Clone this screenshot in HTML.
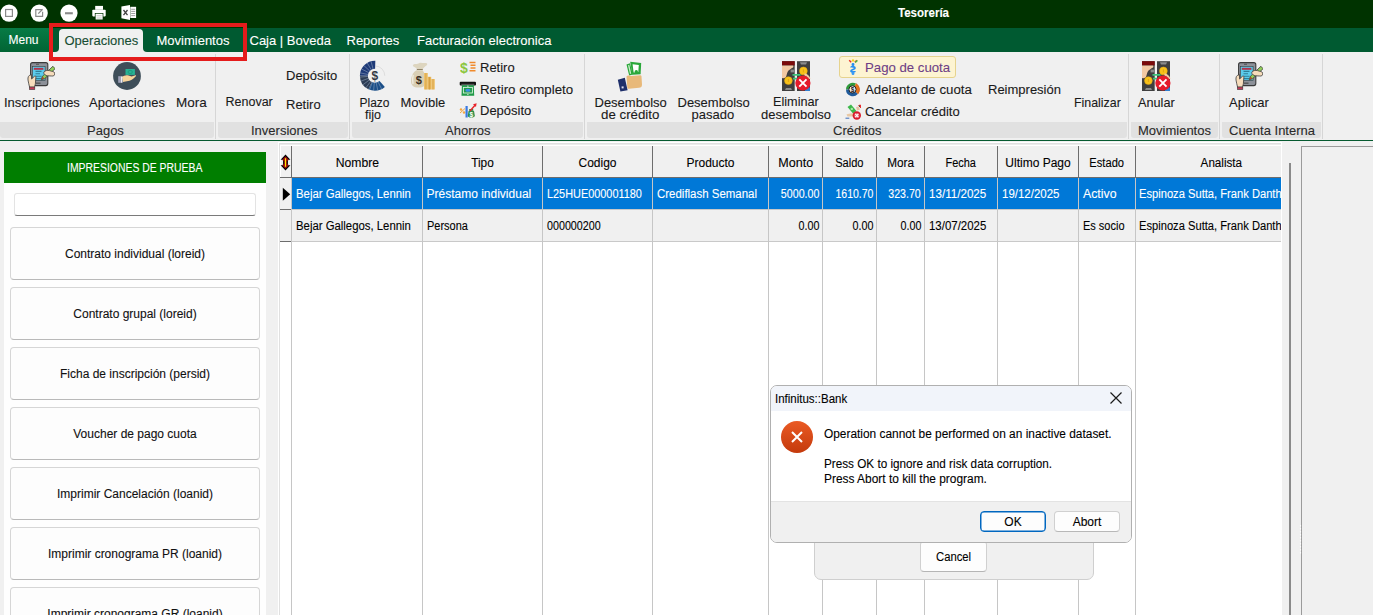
<!DOCTYPE html>
<html><head><meta charset="utf-8">
<style>
*{margin:0;padding:0;box-sizing:border-box}
html,body{width:1373px;height:615px;overflow:hidden;background:#f0f0f0;font-family:"Liberation Sans",sans-serif;position:relative}
.a{position:absolute}
.t{position:absolute;white-space:nowrap;line-height:1;font-size:13px;color:#1a1a1a;-webkit-text-stroke:0.1px currentColor}
#title{left:0;top:0;width:1373px;height:28px;background:#003300}
#menubar{left:0;top:28px;width:1373px;height:24px;background:#005a31}
#ribbon{left:0;top:52px;width:1373px;height:88px;background:#f0f0f0}
.gbar{position:absolute;top:122px;height:16px;background:#e1e1e1;border-radius:0 0 3px 3px}
.sep{position:absolute;top:54px;width:1px;height:85px;background:#d6d6d6}
.gl{position:absolute;top:123.6px;line-height:1;font-size:13px;color:#2a2a2a;white-space:nowrap;-webkit-text-stroke:0.1px currentColor}
</style></head>
<body>
<!-- title bar -->
<div class="a" id="title"></div>
<div class="t" style="left:898px;top:6.9px;font-size:12px;font-weight:bold;color:#fff;transform:scaleX(0.96);transform-origin:0 0">Tesorería</div>

<!-- menu bar -->
<div class="a" id="menubar"></div>
<div class="a" style="left:0;top:28px;width:50px;height:24px;background:linear-gradient(#077b45,#016434)"></div>
<div class="a" style="left:54px;top:46px;width:95px;height:6px;background:#f0f0f0"></div>
<div class="a" style="left:50px;top:28px;width:9px;height:24px;background:#005a31;border-bottom-right-radius:4px"></div>
<div class="a" style="left:143px;top:28px;width:9px;height:24px;background:#005a31;border-bottom-left-radius:4px"></div>
<div class="a" style="left:59px;top:29px;width:84px;height:23px;background:#f0f0f0;border-radius:4px 4px 0 0"></div>
<div class="t" style="left:8.5px;top:34px;font-size:12px;color:#fff">Menu</div>
<div class="t" style="left:64.5px;top:34px;color:#174d33">Operaciones</div>
<div class="t" style="left:156.5px;top:34px;color:#fff">Movimientos</div>
<div class="t" style="left:249.5px;top:34px;color:#fff">Caja | Boveda</div>
<div class="t" style="left:346.5px;top:34px;color:#fff">Reportes</div>
<div class="t" style="left:417px;top:34px;color:#fff">Facturación electronica</div>

<!-- ribbon -->
<div class="a" id="ribbon"></div>
<div class="gbar" style="left:0;width:214px"></div>
<div class="gbar" style="left:218px;width:130px"></div>
<div class="gbar" style="left:352px;width:231px"></div>
<div class="gbar" style="left:587px;width:540px"></div>
<div class="gbar" style="left:1131px;width:87px"></div>
<div class="gbar" style="left:1222px;width:99px"></div>
<div class="sep" style="left:215px"></div>
<div class="sep" style="left:349px"></div>
<div class="sep" style="left:584px"></div>
<div class="sep" style="left:1128px"></div>
<div class="sep" style="left:1219px"></div>
<div class="sep" style="left:1322px"></div>
<div class="gl" style="left:87px">Pagos</div>
<div class="gl" style="left:251px">Inversiones</div>
<div class="gl" style="left:445px">Ahorros</div>
<div class="gl" style="left:833px">Créditos</div>
<div class="gl" style="left:1138px">Movimientos</div>
<div class="gl" style="left:1229px">Cuenta Interna</div>


<!-- title icons -->
<svg class="a" style="left:0;top:0" width="150" height="28" viewBox="0 0 150 28">
 <circle cx="9.05" cy="13.1" r="8.6" fill="#fff"/>
 <rect x="5.6" y="9.5" width="6.8" height="6.9" fill="none" stroke="#8a8a8a" stroke-width="1.2"/>
 <circle cx="39.2" cy="13.1" r="8.6" fill="#fff"/>
 <path d="M42 9.6H35.8V16.4H42.6V11.8" fill="none" stroke="#8a8a8a" stroke-width="1.2"/>
 <path d="M38.3 13.6L42.6 9.2" stroke="#8a8a8a" stroke-width="1.3"/>
 <circle cx="69" cy="13.1" r="8.6" fill="#fff"/>
 <rect x="65" y="12.2" width="7.8" height="2.1" fill="#8a8a8a"/>
 <rect x="95.2" y="5.9" width="7.8" height="3.9" fill="#fff"/>
 <rect x="92.3" y="9.8" width="13.4" height="6.6" rx="0.8" fill="#fff"/>
 <rect x="95.2" y="13.4" width="7.8" height="6.5" fill="#fff" stroke="#003300" stroke-width="0.7"/>
 <path d="M96.5 15.8h5.2M96.5 18h5.2" stroke="#bbb" stroke-width="0.8"/>
 <path d="M121.4 6.4L130 5V20L121.4 18.2Z" fill="#fff"/>
 <rect x="130.3" y="6.8" width="5.8" height="11.2" fill="#fff"/>
 <path d="M123.5 10L127.5 15.2M127.5 10L123.5 15.2" stroke="#444" stroke-width="1.3"/>
 <path d="M131.2 9.3h4M131.2 11.4h4M131.2 13.5h4M131.2 15.6h4" stroke="#888" stroke-width="0.8"/>
</svg>

<!-- ribbon texts -->
<div class="t" style="left:4px;top:96px">Inscripciones</div>
<div class="t" style="left:89px;top:96px">Aportaciones</div>
<div class="t" style="left:176px;top:96px;font-size:13.5px">Mora</div>
<div class="t" style="left:225.5px;top:96px;font-size:12.5px">Renovar</div>
<div class="t" style="left:286px;top:69px">Depósito</div>
<div class="t" style="left:286px;top:97.5px">Retiro</div>
<div class="t" style="left:359.5px;top:96.6px;font-size:12px">Plazo</div>
<div class="t" style="left:365px;top:108.5px;font-size:12.5px">fijo</div>
<div class="t" style="left:400.5px;top:96px">Movible</div>
<div class="t" style="left:480px;top:61px">Retiro</div>
<div class="t" style="left:480px;top:82.5px;font-size:13.3px">Retiro completo</div>
<div class="t" style="left:480px;top:104.3px">Depósito</div>
<div class="t" style="left:594.5px;top:95.5px">Desembolso</div>
<div class="t" style="left:601px;top:108px;font-size:13.3px">de crédito</div>
<div class="t" style="left:677.5px;top:95.5px">Desembolso</div>
<div class="t" style="left:691.5px;top:108px">pasado</div>
<div class="t" style="left:773px;top:95.5px;font-size:12.7px">Eliminar</div>
<div class="t" style="left:761px;top:108px">desembolso</div>
<div class="a" style="left:839px;top:56px;width:117px;height:22px;background:#fdf4d2;border:1px solid #e6d38e;border-radius:3px"></div>
<div class="t" style="left:865px;top:61.4px;color:#6e3f86;font-size:13.2px">Pago de cuota</div>
<div class="t" style="left:865px;top:83px;font-size:13.25px">Adelanto de cuota</div>
<div class="t" style="left:865px;top:105px">Cancelar crédito</div>
<div class="t" style="left:988px;top:83px">Reimpresión</div>
<div class="t" style="left:1074px;top:97px;font-size:12.4px">Finalizar</div>
<div class="t" style="left:1138px;top:96.5px;font-size:12.7px">Anular</div>
<div class="t" style="left:1229px;top:95.5px">Aplicar</div>

<div class="a" style="left:0;top:140px;width:1373px;height:1px;background:#065a30"></div>


<!-- ribbon icons -->
<svg class="a" style="left:27px;top:62px" width="28" height="28" viewBox="0 0 28 28">
 <rect x="3.6" y="0.6" width="17.2" height="23" rx="2" fill="#8d9199" stroke="#3a3a3a" stroke-width="1.1"/>
 <rect x="5.5" y="4.4" width="12.6" height="14" fill="#5cccec" stroke="#3a3a3a" stroke-width="0.6"/>
 <rect x="6.8" y="5.8" width="9.6" height="2" fill="#b3324a"/>
 <path d="M8.5 9.4h6M8.5 11.8h4.5M8.5 14.2h6M8.5 16.6h6" stroke="#2f7f98" stroke-width="1.1"/>
 <path d="M9 2.3h3" stroke="#444" stroke-width="0.8"/>
 <rect x="8.5" y="20.5" width="5" height="1.4" fill="#555"/>
 <path d="M1 18C0.6 15 1.8 13.2 3.5 13L4.4 12.5L4.6 17L7.4 14.3C8.6 13.6 9.4 14.6 8.8 15.8L8.4 21.5C8.2 23 7.4 24.6 7.4 25.2H2.6C2.2 23 1.3 20.6 1 18Z" fill="#f6dcbb" stroke="#3a3a3a" stroke-width="0.8"/>
 <rect x="2.4" y="25" width="5.4" height="2.6" fill="#c23a56" stroke="#3a3a3a" stroke-width="0.6"/>
 <path d="M15.4 14.3L25.9 4.3L28.1 6.7L17.6 16.7L14.3 17.8Z" fill="#92d05a" stroke="#3a3a3a" stroke-width="0.8"/>
 <path d="M14.3 17.8L15.4 14.3L17.6 16.7Z" fill="#a0522d"/>
 <path d="M16.8 10.2C18 8.6 20.5 8 22.5 8.6L24.5 9.2C26.5 9.4 28 10.2 27.8 12C27.6 13.6 26.4 14.2 24.8 14L20.5 13.8C18.6 13.6 16.4 12 16.8 10.2Z" fill="#f6dcbb" stroke="#3a3a3a" stroke-width="0.8"/>
</svg><svg class="a" style="left:1235px;top:62px" width="28" height="28" viewBox="0 0 28 28">
 <rect x="3.6" y="0.6" width="17.2" height="23" rx="2" fill="#8d9199" stroke="#3a3a3a" stroke-width="1.1"/>
 <rect x="5.5" y="4.4" width="12.6" height="14" fill="#5cccec" stroke="#3a3a3a" stroke-width="0.6"/>
 <rect x="6.8" y="5.8" width="9.6" height="2" fill="#b3324a"/>
 <path d="M8.5 9.4h6M8.5 11.8h4.5M8.5 14.2h6M8.5 16.6h6" stroke="#2f7f98" stroke-width="1.1"/>
 <path d="M9 2.3h3" stroke="#444" stroke-width="0.8"/>
 <rect x="8.5" y="20.5" width="5" height="1.4" fill="#555"/>
 <path d="M1 18C0.6 15 1.8 13.2 3.5 13L4.4 12.5L4.6 17L7.4 14.3C8.6 13.6 9.4 14.6 8.8 15.8L8.4 21.5C8.2 23 7.4 24.6 7.4 25.2H2.6C2.2 23 1.3 20.6 1 18Z" fill="#f6dcbb" stroke="#3a3a3a" stroke-width="0.8"/>
 <rect x="2.4" y="25" width="5.4" height="2.6" fill="#c23a56" stroke="#3a3a3a" stroke-width="0.6"/>
 <path d="M15.4 14.3L25.9 4.3L28.1 6.7L17.6 16.7L14.3 17.8Z" fill="#92d05a" stroke="#3a3a3a" stroke-width="0.8"/>
 <path d="M14.3 17.8L15.4 14.3L17.6 16.7Z" fill="#a0522d"/>
 <path d="M16.8 10.2C18 8.6 20.5 8 22.5 8.6L24.5 9.2C26.5 9.4 28 10.2 27.8 12C27.6 13.6 26.4 14.2 24.8 14L20.5 13.8C18.6 13.6 16.4 12 16.8 10.2Z" fill="#f6dcbb" stroke="#3a3a3a" stroke-width="0.8"/>
</svg><svg class="a" style="left:781px;top:61px" width="30" height="31" viewBox="0 0 30 31">
 <path d="M1 0.2H13.7V30H1Z" fill="#3f3f3f"/>
 <path d="M16 0.2H29V30H16Z" fill="#3f3f3f"/>
 <path d="M19 1.2H26L25 3.4H20Z" fill="#8c8c8c"/>
 <path d="M4 29H11L10 27H5Z" fill="#8c8c8c"/>
 <rect x="1" y="0.2" width="12.7" height="4.2" fill="#7b0a0a"/>
 <path d="M1 4.4H12.2C12.8 5.5 12.2 6.8 11 7L7.5 9.5C6.2 11 5.8 13.5 5.2 15.6C4.5 17 3 17.5 1 17Z" fill="#f2c9a3"/>
 <rect x="9.6" y="8.6" width="3.8" height="2.8" fill="#8c8c8c"/>
 <circle cx="7.4" cy="19.6" r="3.9" fill="#f7c21a" stroke="#e8a810" stroke-width="0.5"/>
 <circle cx="22.4" cy="9.9" r="3.9" fill="#f7c21a" stroke="#e8a810" stroke-width="0.5"/>
 <path d="M7.4 18v3M22.4 8.3v3" stroke="#e09a10" stroke-width="0.8"/>
 <path d="M11.5 13.8H19.5M12 17.7H16.5" stroke="#3cc47a" stroke-width="1.8"/>
 <path d="M23.5 13.2C25.8 14 27.5 15.5 28.5 18" stroke="#f2c9a3" stroke-width="2.2" fill="none"/>
 <rect x="24" y="26.5" width="5" height="3.5" fill="#2f7fd0"/>
 <circle cx="21.9" cy="22" r="7.6" fill="#e41b2b"/>
 <path d="M18.3 18.4L25.5 25.6M25.5 18.4L18.3 25.6" stroke="#fff" stroke-width="1.9"/>
</svg><svg class="a" style="left:1141px;top:61px" width="30" height="31" viewBox="0 0 30 31">
 <path d="M1 0.2H13.7V30H1Z" fill="#3f3f3f"/>
 <path d="M16 0.2H29V30H16Z" fill="#3f3f3f"/>
 <path d="M19 1.2H26L25 3.4H20Z" fill="#8c8c8c"/>
 <path d="M4 29H11L10 27H5Z" fill="#8c8c8c"/>
 <rect x="1" y="0.2" width="12.7" height="4.2" fill="#7b0a0a"/>
 <path d="M1 4.4H12.2C12.8 5.5 12.2 6.8 11 7L7.5 9.5C6.2 11 5.8 13.5 5.2 15.6C4.5 17 3 17.5 1 17Z" fill="#f2c9a3"/>
 <rect x="9.6" y="8.6" width="3.8" height="2.8" fill="#8c8c8c"/>
 <circle cx="7.4" cy="19.6" r="3.9" fill="#f7c21a" stroke="#e8a810" stroke-width="0.5"/>
 <circle cx="22.4" cy="9.9" r="3.9" fill="#f7c21a" stroke="#e8a810" stroke-width="0.5"/>
 <path d="M7.4 18v3M22.4 8.3v3" stroke="#e09a10" stroke-width="0.8"/>
 <path d="M11.5 13.8H19.5M12 17.7H16.5" stroke="#3cc47a" stroke-width="1.8"/>
 <path d="M23.5 13.2C25.8 14 27.5 15.5 28.5 18" stroke="#f2c9a3" stroke-width="2.2" fill="none"/>
 <rect x="24" y="26.5" width="5" height="3.5" fill="#2f7fd0"/>
 <circle cx="21.9" cy="22" r="7.6" fill="#e41b2b"/>
 <path d="M18.3 18.4L25.5 25.6M25.5 18.4L18.3 25.6" stroke="#fff" stroke-width="1.9"/>
</svg>
<svg class="a" style="left:113px;top:62px" width="28" height="28" viewBox="0 0 28 28">
 <circle cx="14" cy="14" r="13.9" fill="#3e4e59"/>
 <rect x="12.5" y="7" width="9.4" height="5.9" fill="#27b394"/>
 <ellipse cx="17.2" cy="10" rx="2.2" ry="1.6" fill="none" stroke="#1a8f74" stroke-width="0.7"/>
 <path d="M9 14.8C11 13.5 13.2 13 15.5 13.6L18.6 14.5L22.5 13.3C23.2 13.3 23.2 14 22.6 14.5C21 16 19 18.2 16.5 18.8L10 20Z" fill="#f7d49b"/>
 <rect x="5.2" y="14.2" width="4" height="6.6" fill="#9ea1b8"/>
 <rect x="8.2" y="14.6" width="1.2" height="6" fill="#fff"/>
</svg>
<svg class="a" style="left:355px;top:58px" width="35" height="36" viewBox="0 0 35 36">
 <circle cx="19.9" cy="17.8" r="11" fill="none" stroke="#1b4f88" stroke-width="8" stroke-dasharray="12.86 200" stroke-dashoffset="-9.22"/>
 <circle cx="19.9" cy="17.8" r="11" fill="none" stroke="#2d3d55" stroke-width="8" stroke-dasharray="12.48 200" stroke-dashoffset="-22.08"/>
 <circle cx="19.9" cy="17.8" r="11" fill="none" stroke="#1e3a78" stroke-width="8" stroke-dasharray="17.28 200" stroke-dashoffset="-34.56"/>
 <circle cx="19.9" cy="17.8" r="9.9" fill="none" stroke="#c8c8c8" stroke-width="0.5" stroke-dasharray="23.84 200" stroke-dashoffset="-46.65"/>
 <path d="M23.1 24.0L26.7 31.2M21.2 24.7L22.8 32.5M19.3 24.8L18.6 32.7M17.4 24.3L14.5 31.8M15.7 23.4L10.9 29.8M14.3 22.0L7.9 26.8M13.4 20.3L5.9 23.2M12.9 18.4L5.0 19.1M13.0 16.5L5.2 14.9M13.7 14.6L6.5 11.0M14.8 13.0L8.9 7.6M16.3 11.8L12.2 4.9M18.1 11.0L16.0 3.3" stroke="#9fb0c8" stroke-width="0.5"/>
 <text x="19.9" y="22.1" font-family="Liberation Sans" font-size="12" font-weight="bold" text-anchor="middle" fill="#333a44">$</text>
</svg>
<svg class="a" style="left:410px;top:62px" width="26" height="28" viewBox="0 0 26 28">
 <path d="M3.5 2.5C5.5 1.2 7 2.6 9 1.2C11 0.2 13 1.5 15.5 1C17.5 1 17.8 2.5 16.5 3.4C15 4.5 13.5 5.5 12.5 7.2H7C6 6 4.5 5 3.5 4.5C2.6 4 2.8 3 3.5 2.5Z" fill="#ddd5bf"/>
 <path d="M6.8 7.5H12.8" stroke="#8f8368" stroke-width="1"/>
 <path d="M6.5 8.2C3 10 1 14.5 1 19C1 23.5 3.5 25.6 8.5 25.6C13.5 25.6 16 23.5 16 19C16 14.5 14 10 12.6 8.2Z" fill="#d9cfb5"/>
 <path d="M3.2 13C2.5 15.5 2.4 19 3 22" stroke="#f1ece0" stroke-width="1.4" fill="none"/>
 <text x="8.7" y="22" font-family="Liberation Sans" font-size="11" font-weight="bold" text-anchor="middle" fill="#3a2d22">$</text>
 <rect x="14" y="11" width="3.8" height="16.5" fill="#efc168"/>
 <rect x="17.8" y="14.8" width="3.4" height="12.7" fill="#e6b458"/>
 <rect x="21.2" y="17" width="3.6" height="10.5" fill="#efc168"/>
 <path d="M15.9 11v16.5M19.5 15v12.5M23 17v10.5" stroke="#c8923a" stroke-width="0.6"/>
</svg>
<svg class="a" style="left:460px;top:60px" width="17" height="14" viewBox="0 0 17 14">
 <text x="0" y="12.5" font-family="Liberation Sans" font-size="14" font-weight="bold" fill="#8cc63f">$</text>
 <path d="M9.5 2.5h6M10.5 5.3h5M10.5 8h5M9.5 10.8h6" stroke="#f08a2c" stroke-width="1.5"/>
</svg>
<svg class="a" style="left:459px;top:81px" width="18" height="16" viewBox="0 0 18 16">
 <rect x="0.7" y="0.8" width="16.3" height="3.8" rx="1" fill="#111"/>
 <rect x="2.3" y="2.8" width="13" height="1.2" fill="#555"/>
 <path d="M2.9 4.2H14.8L15.2 14.7H2.5Z" fill="#1f9a48"/>
 <rect x="4.4" y="6.4" width="9" height="5.6" fill="none" stroke="#d8f0dc" stroke-width="0.9"/>
 <ellipse cx="8.9" cy="9.2" rx="2.6" ry="1.5" fill="#3a8ee8"/>
 <circle cx="8.9" cy="5.2" r="0.6" fill="#fff"/><circle cx="8.9" cy="13.3" r="0.6" fill="#fff"/>
</svg>
<svg class="a" style="left:458px;top:103px" width="19" height="15" viewBox="0 0 19 15">
 <circle cx="3" cy="6.5" r="1.2" fill="#f4a640"/><circle cx="6" cy="9.5" r="1.2" fill="#f4a640"/>
 <path d="M2 10L7 5.5" stroke="#f4a640" stroke-width="1"/>
 <rect x="7.5" y="3" width="2.2" height="11.5" fill="#3a7ae0"/>
 <path d="M10.5 8C11.5 7 15 7 16 8L16.8 12.5C16.8 14 15.5 14.6 13.3 14.6C11 14.6 9.8 14 9.8 12.5Z" fill="#2e8f4e"/>
 <rect x="11.2" y="6" width="4" height="1.6" fill="#2e8f4e"/>
 <text x="13.3" y="13.6" font-family="Liberation Sans" font-size="6.5" font-weight="bold" text-anchor="middle" fill="#fff">$</text>
 <path d="M12 8L17.2 2" stroke="#e8232b" stroke-width="1.4"/>
 <path d="M15 1.2L18.6 0.2L18 3.9Z" fill="#e8232b"/>
</svg>
<svg class="a" style="left:617px;top:61px" width="26" height="31" viewBox="0 0 26 31">
 <path d="M9.5 3.5L13 2.2L15.8 13.5L12.2 14.6Z" fill="#2aa83a"/>
 <path d="M11 4.3L12.3 3.8L14.2 12.6L13 13Z" fill="#c8ecc8"/>
 <path d="M13.2 0.8L24.2 2L23.6 13.2L15.3 13.8Z" fill="#2aa83a"/>
 <path d="M15.6 3.3L21.8 4.1L21.3 11L16.6 11.4Z" fill="#fff"/>
 <circle cx="19.3" cy="10.8" r="1.7" fill="#2aa83a"/>
 <path d="M9.5 15.5C10 14.6 11 14.2 12 14.6L14 15L23.5 14.3C24.3 14.4 24.6 15 24.5 15.8L25 23.5C25 26 24 26.5 22 26.8L12 27.8C10.8 27.8 10.3 27.3 10.3 26.2Z" fill="#e8b97a"/>
 <path d="M0.8 18.8L7.8 16.8L10.6 29.2L3.4 30.6Z" fill="#1e2f6a"/>
 <rect x="4.6" y="25.4" width="2" height="2" fill="#dde"/>
</svg>
<svg class="a" style="left:846px;top:59px" width="14" height="17" viewBox="0 0 14 17">
 <path d="M3.2 1.2L5.2 3.2M10.8 1.2L8.8 3.2" stroke="#e8342a" stroke-width="1.4"/>
 <path d="M11.5 1.5L9.2 3.4" stroke="#4fb848" stroke-width="1.4"/>
 <circle cx="7" cy="1.4" r="1.2" fill="#f5d418"/>
 <rect x="5.6" y="4" width="2.8" height="3" rx="1.2" fill="#2a8ff0"/>
 <path d="M5 8.5C5 7 9 7.5 9 9C9 10.5 5 10.5 5 12C5 13.5 9 13 9 12" stroke="#2a8ff0" stroke-width="1.8" fill="none"/>
 <rect x="5.6" y="12.6" width="2.8" height="3.4" rx="1.3" fill="#3a9cf5"/>
</svg>
<svg class="a" style="left:845px;top:82px" width="16" height="15" viewBox="0 0 16 15">
 <path d="M7.7 7.4L1 7.4A6.8 6.8 0 0 1 11 1.6Z" fill="#2f9a3a"/>
 <path d="M7.7 7.4L11 1.6A6.8 6.8 0 0 1 12.8 12Z" fill="#e8741c"/>
 <path d="M7.7 7.4L12.8 12A6.8 6.8 0 0 1 1 7.4Z" fill="#1f5a9a"/>
 <path d="M11 1.6A6.8 6.8 0 0 1 12.8 12" stroke="#c85a10" stroke-width="0.8" fill="none"/>
 <circle cx="7.5" cy="7.4" r="3.6" fill="#f5f5f5" stroke="#222" stroke-width="1"/>
 <text x="7.5" y="9.9" font-family="Liberation Sans" font-size="6.5" font-weight="bold" text-anchor="middle" fill="#222">$</text>
</svg>
<svg class="a" style="left:845px;top:104px" width="17" height="16" viewBox="0 0 17 16">
 <path d="M2.5 3L6 0.5L11.5 7L8 9.5Z" fill="#3cb84a"/>
 <circle cx="6.8" cy="4.9" r="1.2" fill="#a8e6a8"/>
 <path d="M11 3L13.5 2.5L15 5.5L12 6.5Z" fill="#e8c0a0"/>
 <path d="M13.5 1.5L15.5 1L15.5 4" stroke="#e83030" stroke-width="1"/>
 <path d="M1.5 10.5C3.5 9.5 7 9.3 10 9.6L10.5 12.5H2.5Z" fill="#e9c8a4"/>
 <path d="M0.5 14.2h3.8" stroke="#3a6ab8" stroke-width="1"/>
 <circle cx="11.8" cy="11.5" r="4.2" fill="#d81b2a"/>
 <circle cx="11.8" cy="11.5" r="2.6" fill="#e86070"/>
 <path d="M10.2 9.9L13.4 13.1M13.4 9.9L10.2 13.1" stroke="#fff" stroke-width="1.2"/>
</svg>

<!-- left panel -->
<div class="a" style="left:4px;top:152px;width:262px;height:463px;background:#fefefe"></div>
<div class="a" style="left:4px;top:152px;width:262px;height:31px;background:#007e00"></div>
<div class="t" style="left:67.40px;top:161.64px;font-size:12px;color:#fff;transform:scaleX(0.868);transform-origin:0 0">IMPRESIONES DE PRUEBA</div>
<div class="a" style="left:14px;top:193px;width:242px;height:23px;background:#fff;border:1px solid #e3e3e3;border-bottom:1px solid #7a7a7a;border-radius:3px"></div>
<div class="a" style="left:10px;top:227px;width:250px;height:53px;background:#fdfdfd;border:1px solid #d6d6d6;border-bottom-color:#b9b9b9;border-radius:4px"></div>
<div class="t" style="left:64.97px;top:247.54px;font-size:12px;color:#111">Contrato individual (loreid)</div>
<div class="a" style="left:10px;top:287px;width:250px;height:53px;background:#fdfdfd;border:1px solid #d6d6d6;border-bottom-color:#b9b9b9;border-radius:4px"></div>
<div class="t" style="left:73.30px;top:307.54px;font-size:12px;color:#111">Contrato grupal (loreid)</div>
<div class="a" style="left:10px;top:347px;width:250px;height:53px;background:#fdfdfd;border:1px solid #d6d6d6;border-bottom-color:#b9b9b9;border-radius:4px"></div>
<div class="t" style="left:59.97px;top:367.54px;font-size:12px;color:#111">Ficha de inscripción (persid)</div>
<div class="a" style="left:10px;top:407px;width:250px;height:53px;background:#fdfdfd;border:1px solid #d6d6d6;border-bottom-color:#b9b9b9;border-radius:4px"></div>
<div class="t" style="left:73.28px;top:427.54px;font-size:12px;color:#111">Voucher de pago cuota</div>
<div class="a" style="left:10px;top:467px;width:250px;height:53px;background:#fdfdfd;border:1px solid #d6d6d6;border-bottom-color:#b9b9b9;border-radius:4px"></div>
<div class="t" style="left:56.97px;top:487.54px;font-size:12px;color:#111">Imprimir Cancelación (loanid)</div>
<div class="a" style="left:10px;top:527px;width:250px;height:53px;background:#fdfdfd;border:1px solid #d6d6d6;border-bottom-color:#b9b9b9;border-radius:4px"></div>
<div class="t" style="left:47.98px;top:547.54px;font-size:12px;color:#111">Imprimir cronograma PR (loanid)</div>
<div class="a" style="left:10px;top:587px;width:250px;height:53px;background:#fdfdfd;border:1px solid #d6d6d6;border-bottom-color:#b9b9b9;border-radius:4px"></div>
<div class="t" style="left:47.31px;top:607.54px;font-size:12px;color:#111">Imprimir cronograma GR (loanid)</div>
<!-- grid -->
<div class="a" style="left:278px;top:142px;width:1004px;height:473px;background:#fff"></div>
<div class="a" style="left:279px;top:143px;width:1002px;height:472px;background:#fff;border-left:1px solid #e0e0e0;border-top:1px solid #e0e0e0"></div>
<div class="a" style="left:280px;top:144px;width:1001px;height:1px;background:#ececec"></div>
<div class="a" style="left:280px;top:145px;width:1001px;height:32px;background:#f0f0f0;border-top:1px solid #fff;border-left:1px solid #fff"></div>
<div class="a" style="left:280px;top:178px;width:11px;height:63px;background:#f0f0f0"></div>
<div class="a" style="left:292px;top:178px;width:989px;height:31px;background:#0078d7"></div>
<div class="a" style="left:292px;top:210px;width:989px;height:31px;background:#f0f0f0"></div>
<div class="a" style="left:280px;top:177px;width:1001px;height:1px;background:#6d6d6d"></div>
<div class="a" style="left:280px;top:209px;width:12px;height:1px;background:#6d6d6d"></div>
<div class="a" style="left:280px;top:241px;width:12px;height:1px;background:#6d6d6d"></div>
<div class="a" style="left:292px;top:209px;width:989px;height:1px;background:#c9c9c9"></div>
<div class="a" style="left:292px;top:241px;width:989px;height:1px;background:#c9c9c9"></div>
<div class="a" style="left:291px;top:146px;width:1px;height:31px;background:#6d6d6d"></div>
<div class="a" style="left:291px;top:178px;width:1px;height:437px;background:#c6c6c6"></div>
<div class="a" style="left:422px;top:146px;width:1px;height:31px;background:#6d6d6d"></div>
<div class="a" style="left:422px;top:178px;width:1px;height:437px;background:#c6c6c6"></div>
<div class="a" style="left:542px;top:146px;width:1px;height:31px;background:#6d6d6d"></div>
<div class="a" style="left:542px;top:178px;width:1px;height:437px;background:#c6c6c6"></div>
<div class="a" style="left:652px;top:146px;width:1px;height:31px;background:#6d6d6d"></div>
<div class="a" style="left:652px;top:178px;width:1px;height:437px;background:#c6c6c6"></div>
<div class="a" style="left:768px;top:146px;width:1px;height:31px;background:#6d6d6d"></div>
<div class="a" style="left:768px;top:178px;width:1px;height:437px;background:#c6c6c6"></div>
<div class="a" style="left:822px;top:146px;width:1px;height:31px;background:#6d6d6d"></div>
<div class="a" style="left:822px;top:178px;width:1px;height:437px;background:#c6c6c6"></div>
<div class="a" style="left:876px;top:146px;width:1px;height:31px;background:#6d6d6d"></div>
<div class="a" style="left:876px;top:178px;width:1px;height:437px;background:#c6c6c6"></div>
<div class="a" style="left:924px;top:146px;width:1px;height:31px;background:#6d6d6d"></div>
<div class="a" style="left:924px;top:178px;width:1px;height:437px;background:#c6c6c6"></div>
<div class="a" style="left:997px;top:146px;width:1px;height:31px;background:#6d6d6d"></div>
<div class="a" style="left:997px;top:178px;width:1px;height:437px;background:#c6c6c6"></div>
<div class="a" style="left:1078px;top:146px;width:1px;height:31px;background:#6d6d6d"></div>
<div class="a" style="left:1078px;top:178px;width:1px;height:437px;background:#c6c6c6"></div>
<div class="a" style="left:1135px;top:146px;width:1px;height:31px;background:#6d6d6d"></div>
<div class="a" style="left:1135px;top:178px;width:1px;height:437px;background:#c6c6c6"></div>
<svg class="a" style="left:280px;top:154px" width="11" height="17" viewBox="0 0 11 17">
 <path d="M5.5 0.6L10.4 5.8H7.9V11.2H10.4L5.5 16.4L0.6 11.2H3.1V5.8H0.6Z" fill="#000"/>
 <path d="M5.5 2.2L8.2 5V6.8H6.9V10.2H8.2V12L5.5 14.8L2.8 12V10.2H4.1V6.8H2.8V5Z" fill="#9a0a0a"/>
 <rect x="4.9" y="4.2" width="1.2" height="8.6" fill="#ffe800"/>
</svg>
<svg class="a" style="left:282px;top:187px" width="9" height="15" viewBox="0 0 9 15"><path d="M0.8 0.8L8.2 7.3L0.8 13.8Z" fill="#000"/></svg>
<div class="t" style="left:335.66px;top:157.14px;font-size:12px;color:#000;transform:scaleX(1.015);transform-origin:50% 0">Nombre</div>
<div class="t" style="left:471.05px;top:157.14px;font-size:12px;color:#000;transform:scaleX(0.987);transform-origin:50% 0">Tipo</div>
<div class="t" style="left:578.49px;top:157.14px;font-size:12px;color:#000">Codigo</div>
<div class="t" style="left:686.49px;top:157.14px;font-size:12px;color:#000">Producto</div>
<div class="t" style="left:778.82px;top:157.14px;font-size:12px;color:#000;transform:scaleX(1.046);transform-origin:50% 0">Monto</div>
<div class="t" style="left:834.15px;top:157.14px;font-size:12px;color:#000;transform:scaleX(0.925);transform-origin:50% 0">Saldo</div>
<div class="t" style="left:886.83px;top:157.14px;font-size:12px;color:#000;transform:scaleX(0.980);transform-origin:50% 0">Mora</div>
<div class="t" style="left:944.32px;top:157.14px;font-size:12px;color:#000;transform:scaleX(0.914);transform-origin:50% 0">Fecha</div>
<div class="t" style="left:1005.32px;top:157.14px;font-size:12px;color:#000">Ultimo Pago</div>
<div class="t" style="left:1088.32px;top:157.14px;font-size:12px;color:#000;transform:scaleX(0.929);transform-origin:50% 0">Estado</div>
<div class="t" style="left:1199.65px;top:157.14px;font-size:12px;color:#000;transform:scaleX(0.972);transform-origin:50% 0">Analista</div>
<div class="t" style="left:295.50px;top:187.64px;font-size:12px;color:#fff;transform:scaleX(0.946);transform-origin:0 0">Bejar Gallegos, Lennin</div>
<div class="t" style="left:426.50px;top:187.64px;font-size:12px;color:#fff">Préstamo individual</div>
<div class="t" style="left:546.50px;top:187.64px;font-size:12px;color:#fff;transform:scaleX(0.908);transform-origin:0 0">L25HUE000001180</div>
<div class="t" style="left:656.50px;top:187.64px;font-size:12px;color:#fff;transform:scaleX(0.955);transform-origin:0 0">Crediflash Semanal</div>
<div class="t" style="left:775.62px;top:187.64px;font-size:12px;color:#fff;transform:scaleX(0.888);transform-origin:100% 0">5000.00</div>
<div class="t" style="left:829.62px;top:187.64px;font-size:12px;color:#fff;transform:scaleX(0.874);transform-origin:100% 0">1610.70</div>
<div class="t" style="left:884.30px;top:187.64px;font-size:12px;color:#fff;transform:scaleX(0.885);transform-origin:100% 0">323.70</div>
<div class="t" style="left:928.50px;top:187.64px;font-size:12px;color:#fff;transform:scaleX(0.968);transform-origin:0 0">13/11/2025</div>
<div class="t" style="left:1001.50px;top:187.64px;font-size:12px;color:#fff;transform:scaleX(0.956);transform-origin:0 0">19/12/2025</div>
<div class="t" style="left:1082.50px;top:187.64px;font-size:12px;color:#fff;transform:scaleX(1.025);transform-origin:0 0">Activo</div>
<div class="t" style="left:295.50px;top:220.04px;font-size:12px;color:#000;transform:scaleX(0.946);transform-origin:0 0">Bejar Gallegos, Lennin</div>
<div class="t" style="left:426.50px;top:220.04px;font-size:12px;color:#000;transform:scaleX(0.915);transform-origin:0 0">Persona</div>
<div class="t" style="left:546.50px;top:220.04px;font-size:12px;color:#000;transform:scaleX(0.894);transform-origin:0 0">000000200</div>
<div class="t" style="left:795.64px;top:220.04px;font-size:12px;color:#000;transform:scaleX(0.895);transform-origin:100% 0">0.00</div>
<div class="t" style="left:849.64px;top:220.04px;font-size:12px;color:#000;transform:scaleX(0.895);transform-origin:100% 0">0.00</div>
<div class="t" style="left:897.64px;top:220.04px;font-size:12px;color:#000;transform:scaleX(0.895);transform-origin:100% 0">0.00</div>
<div class="t" style="left:928.50px;top:220.04px;font-size:12px;color:#000;transform:scaleX(0.954);transform-origin:0 0">13/07/2025</div>
<div class="t" style="left:1082.50px;top:220.04px;font-size:12px;color:#000;transform:scaleX(0.915);transform-origin:0 0">Es socio</div>
<div class="a" style="left:1136px;top:184.64px;width:145px;height:18px;overflow:hidden"><div class="t" style="left:3.3px;top:3px;font-size:12px;color:#fff;transform:scaleX(0.93);transform-origin:0 0">Espinoza Sutta, Frank Danthe</div></div>
<div class="a" style="left:1136px;top:217.04px;width:145px;height:18px;overflow:hidden"><div class="t" style="left:3.3px;top:3px;font-size:12px;color:#000;transform:scaleX(0.93);transform-origin:0 0">Espinoza Sutta, Frank Danthe</div></div>
<div class="a" style="left:1289px;top:163px;width:2px;height:452px;background:#8a8a8a"></div>
<div class="a" style="left:1301px;top:146px;width:72px;height:469px;border-left:1px solid #9b9b9b;border-top:1px solid #9b9b9b;background:#f0f0f0"></div>
<svg class="a" style="left:1299px;top:524px" width="3" height="32"><path d="M1.5 1v30" stroke="#fff" stroke-width="1.2" stroke-dasharray="1.5 1.5"/></svg>
<!-- dialog behind -->
<div class="a" style="left:814px;top:500px;width:280px;height:80px;background:#f0f0f0;border:1px solid #cfcfcf;border-radius:0 0 7px 7px"></div>
<div class="a" style="left:920px;top:541px;width:67px;height:31px;background:#fdfdfd;border:1px solid #d0d0d0;border-bottom-color:#b5b5b5;border-radius:4px"></div>
<div class="t" style="left:936.40px;top:551.14px;font-size:12px;color:#000;transform:scaleX(0.940);transform-origin:0 0">Cancel</div>
<!-- dialog -->
<div class="a" style="left:770px;top:385px;width:362px;height:158px;background:#fff;border:1px solid #b0b0b0;border-radius:7px;overflow:hidden"><div class="a" style="left:0;top:0;width:360px;height:25px;background:#f1f4fa"></div><div class="a" style="left:0;top:115px;width:360px;height:42px;background:#f0f0f0;border-top:1px solid #e3e3e3"></div></div>
<div class="t" style="left:774.70px;top:392.64px;font-size:12px;color:#000;transform:scaleX(0.958);transform-origin:0 0">Infinitus::Bank</div>
<svg class="a" style="left:1109px;top:391px" width="14" height="14" viewBox="0 0 14 14"><path d="M1.5 1.5L12.5 12.5M12.5 1.5L1.5 12.5" stroke="#1a1a1a" stroke-width="1.2"/></svg>
<svg class="a" style="left:780px;top:420px" width="34" height="34" viewBox="0 0 34 34">
 <defs><linearGradient id="eg" x1="0" y1="0" x2="0" y2="1"><stop offset="0" stop-color="#ea5a24"/><stop offset="1" stop-color="#c43a0c"/></linearGradient></defs>
 <circle cx="17" cy="17" r="16" fill="url(#eg)"/>
 <path d="M12 12L22 22M22 12L12 22" stroke="#fff" stroke-width="2"/>
</svg>
<div class="t" style="left:823.60px;top:428.34px;font-size:12px;color:#000;transform:scaleX(0.991);transform-origin:0 0">Operation cannot be performed on an inactive dataset.</div>
<div class="t" style="left:823.60px;top:458.24px;font-size:12px;color:#000;transform:scaleX(0.977);transform-origin:0 0">Press OK to ignore and risk data corruption.</div>
<div class="t" style="left:823.60px;top:473.14px;font-size:12px;color:#000;transform:scaleX(0.993);transform-origin:0 0">Press Abort to kill the program.</div>
<div class="a" style="left:980px;top:511px;width:66px;height:21px;background:#fdfdfd;border:1px solid #0067c0;border-radius:4px;box-shadow:inset 0 0 0 0.5px #0067c0"></div>
<div class="t" style="left:1004.33px;top:516.04px;font-size:12px;color:#000">OK</div>
<div class="a" style="left:1054px;top:511px;width:66px;height:21px;background:#fdfdfd;border:1px solid #d0d0d0;border-bottom-color:#b8b8b8;border-radius:4px"></div>
<div class="t" style="left:1072.66px;top:516.04px;font-size:12px;color:#000">Abort</div>
<!-- red highlight -->
<div class="a" style="left:49.3px;top:23px;width:197.7px;height:38px;border:4px solid #e51c1c;border-top-width:4.5px"></div>
</body></html>
